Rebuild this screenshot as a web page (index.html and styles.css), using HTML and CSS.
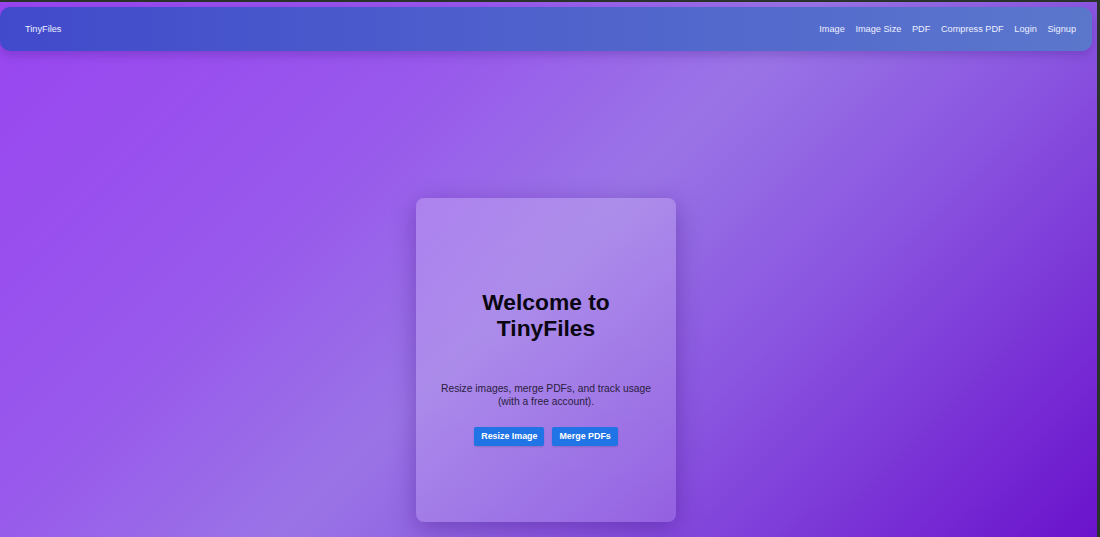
FILE: index.html
```html
<!DOCTYPE html>
<html lang="en">
<head>
<meta charset="utf-8">
<title>TinyFiles</title>
<link rel="stylesheet" href="styles.css">
</head>
<body>
<div class="frame">
  <nav class="navbar">
    <a class="brand" href="#">TinyFiles</a>
    <div class="links">
      <a href="#">Image</a>
      <a href="#">Image Size</a>
      <a href="#">PDF</a>
      <a href="#">Compress PDF</a>
      <a href="#">Login</a>
      <a href="#">Signup</a>
    </div>
  </nav>
  <main class="main">
    <section class="card">
      <h1 class="title">Welcome to<br>TinyFiles</h1>
      <p class="lead">Resize images, merge PDFs, and track usage<br>(with a free account).</p>
      <div class="actions">
        <a class="btn" href="#">Resize Image</a>
        <a class="btn" href="#">Merge PDFs</a>
      </div>
    </section>
  </main>
</div>
</body>
</html>
```
FILE: styles.css
```css
html, body {
  margin: 0;
  padding: 0;
  height: 100%;
  background: #2a322c;
  overflow: hidden;
}
body {
  font-family: "Liberation Sans", Arial, sans-serif;
}
.frame {
  box-sizing: border-box;
  height: 537px;
  width: 1100px;
  border-top: 2px solid #2a322c;
  border-right: 3px solid #2a322c;
  background:
    linear-gradient(135deg, #9945f0 0%, #9858ec 30%, #9a74e6 50%, #8a55e0 68%, #6a12cc 100%);
  display: flex;
  flex-direction: column;
}
.navbar {
  margin-top: 5px;
  width: 1092px;
  height: 44px;
  box-sizing: border-box;
  padding: 0 16px 0 25px;
  display: flex;
  align-items: center;
  justify-content: space-between;
  border-radius: 10px;
  background: linear-gradient(90deg, #414acb 0%, #4f62cc 50%, #5a77cc 100%);
  box-shadow: 0 4px 10px rgba(60, 20, 120, 0.25);
}
.navbar a {
  color: #eef0ff;
  text-decoration: none;
  font-size: 9.2px;
}
.links {
  display: flex;
  gap: 10.6px;
}
.main {
  flex: 1;
  width: 1092px;
  display: flex;
  justify-content: center;
  padding-top: 147px;
}
.card {
  box-sizing: border-box;
  width: 260px;
  height: 324px;
  border-radius: 8px;
  background: linear-gradient(160deg, rgba(255,255,255,0.2), rgba(255,255,255,0.12));
  box-shadow: 0 6px 24px rgba(50, 10, 110, 0.35);
  padding-top: 91px;
  text-align: center;
}
.title {
  margin: 0 0 42px;
  font-size: 22.8px;
  font-weight: bold;
  line-height: 26px;
  color: #0a0612;
}
.lead {
  margin: 0;
  font-size: 10.3px;
  line-height: 12.6px;
  color: #2a2040;
}
.actions {
  margin-top: 19px;
  display: flex;
  justify-content: center;
  gap: 8px;
}
.btn {
  display: inline-block;
  height: 19px;
  line-height: 19px;
  padding: 0 7px;
  background: #2174e6;
  color: #ffffff;
  font-size: 8.9px;
  font-weight: bold;
  text-decoration: none;
  border-radius: 2px;
  box-shadow: 0 1px 2px rgba(0,0,0,0.15);
}
```
